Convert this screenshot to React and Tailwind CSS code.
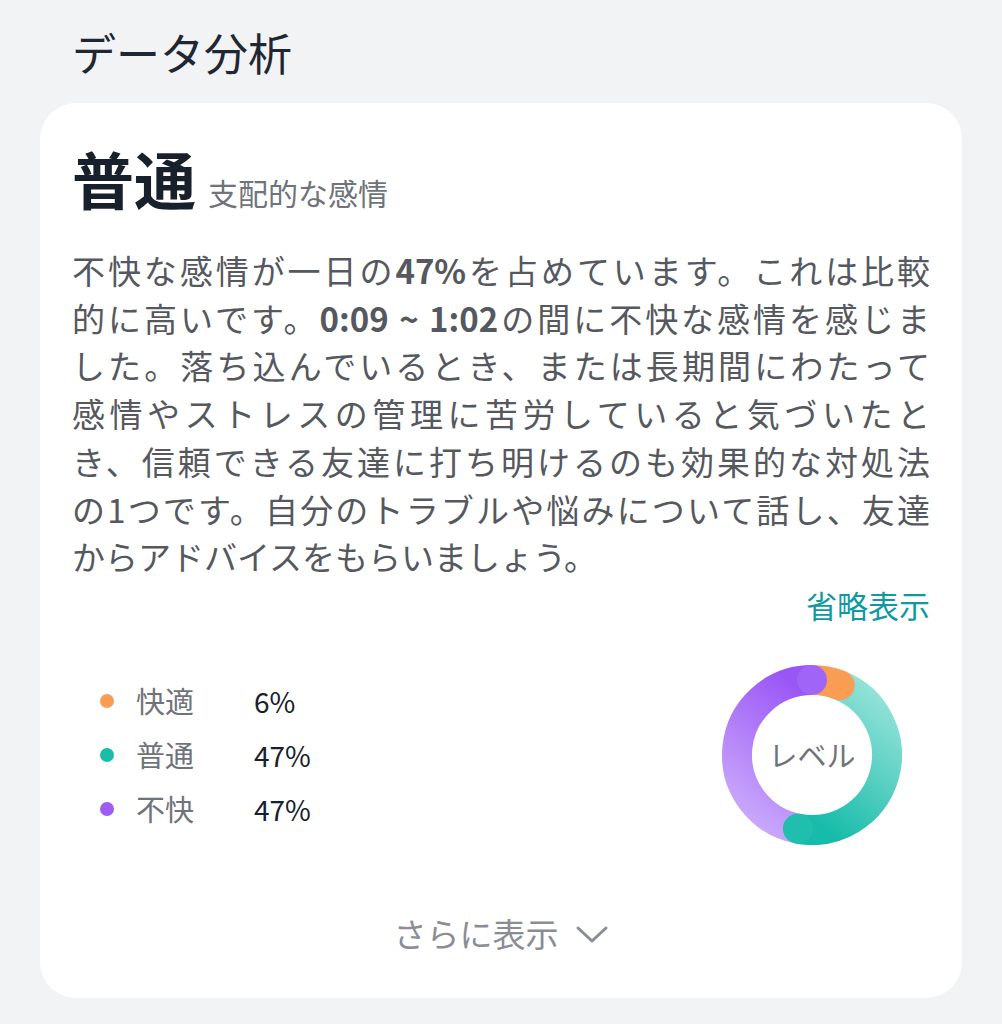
const FONT = { fontFamily: '"Noto Sans CJK JP", "Noto Sans", sans-serif' };

const LINES = [
  ['不快な感情が一日の', <b key="b">47%</b>, 'を占めています。これは比較'],
  ['的に高いです。', <b key="b">0:09 ~ 1:02</b>, 'の間に不快な感情を感じま'],
  ['した。落ち込んでいるとき、または長期間にわたって'],
  ['感情やストレスの管理に苦労していると気づいたと'],
  ['き、信頼できる友達に打ち明けるのも効果的な対処法'],
  ['の1つです。自分のトラブルや悩みについて話し、友達'],
];

const LEGEND = [
  { label: '快適', value: '6%', dot: 'bg-[#f99d55]' },
  { label: '普通', value: '47%', dot: 'bg-[#1cbcaa]' },
  { label: '不快', value: '47%', dot: 'bg-[#9f5cf5]' },
];

function point(cx, cy, r, deg) {
  const a = ((deg - 90) * Math.PI) / 180;
  return [cx + r * Math.cos(a), cy + r * Math.sin(a)];
}

function arc(cx, cy, r, from, to) {
  const [x1, y1] = point(cx, cy, r, from);
  const [x2, y2] = point(cx, cy, r, to);
  const large = to - from > 180 ? 1 : 0;
  return `M ${x1} ${y1} A ${r} ${r} 0 ${large} 1 ${x2} ${y2}`;
}

function Donut() {
  const c = 90, r = 75, w = 30;
  const segs = [
    { from: 0, to: 21.6, stroke: '#f99d55', cap: '#f99d55' },
    { from: 21.6, to: 190.8, stroke: 'url(#teal)', cap: '#20bfad' },
    { from: 190.8, to: 360, stroke: 'url(#purple)', cap: '#a064f6' },
  ];
  return (
    <div className="relative w-[180px] h-[180px]">
      <svg width="180" height="180" viewBox="0 0 180 180">
        <defs>
          <linearGradient id="teal" x1="0.8" y1="0" x2="0.3" y2="1">
            <stop offset="0" stopColor="#93e2d8" />
            <stop offset="1" stopColor="#17bba9" />
          </linearGradient>
          <linearGradient id="purple" x1="0.7" y1="0" x2="0.3" y2="1">
            <stop offset="0" stopColor="#9a56f5" />
            <stop offset="1" stopColor="#c9a8fb" />
          </linearGradient>
        </defs>
        {segs.map((s, i) => (
          <path key={i} d={arc(c, c, r, s.from, s.to - 0.01)} fill="none" stroke={s.stroke} strokeWidth={w} />
        ))}
        {segs.map((s, i) => {
          const [x, y] = point(c, c, r, s.to);
          return <circle key={'c' + i} cx={x} cy={y} r={w / 2} fill={s.cap} />;
        })}
      </svg>
      <div className="absolute inset-0 flex items-center justify-center text-[29px] text-[#6f737a]">レベル</div>
    </div>
  );
}

export default function App() {
  return (
    <div className="min-h-[1024px] bg-[#f2f3f5] px-10 pb-[27px]" style={FONT}>
      <h1 className="pl-8 pt-[24px] pb-[23px] text-[44px] leading-[56px] font-normal text-[#1f2733]">データ分析</h1>

      <div className="bg-white rounded-[36px] px-8 pt-[40px] pb-[40px]">
        <div className="flex items-baseline gap-3">
          <span className="text-[62px] leading-[70px] font-bold text-[#18202c]">普通</span>
          <span className="text-[30px] text-[#6f737a]">支配的な感情</span>
        </div>

        <div className="mt-[32px] text-[33px] leading-[47.7px] text-[#55585e]">
          {LINES.map((l, i) => (
            <div key={i} className="text-justify [text-align-last:justify]">{l}</div>
          ))}
          <div>からアドバイスをもらいましょう。</div>
        </div>

        <div className="text-right text-[31px] leading-[48px] text-[#0e9a9f]">省略表示</div>

        <div className="flex items-center justify-between mt-[36px] pr-7">
          <div className="flex flex-col gap-[16px] pl-7">
            {LEGEND.map((it) => (
              <div key={it.label} className="flex items-center h-[38px]">
                <span className={`w-[14px] h-[14px] rounded-full ${it.dot}`} />
                <span className="ml-[22px] w-[118px] text-[29px] text-[#6f737a]">{it.label}</span>
                <span className="text-[28px] text-[#18202c]">{it.value}</span>
              </div>
            ))}
          </div>
          <Donut />
        </div>

        <div className="flex items-center justify-center gap-4 mt-[64px] text-[33px] text-[#8a8d94]">
          <span>さらに表示</span>
          <svg width="34" height="20" viewBox="0 0 34 20" fill="none" stroke="#8a8d94" strokeWidth="3" strokeLinecap="round" strokeLinejoin="round">
            <path d="M3 4 L17 17 L31 4" />
          </svg>
        </div>
      </div>
    </div>
  );
}
